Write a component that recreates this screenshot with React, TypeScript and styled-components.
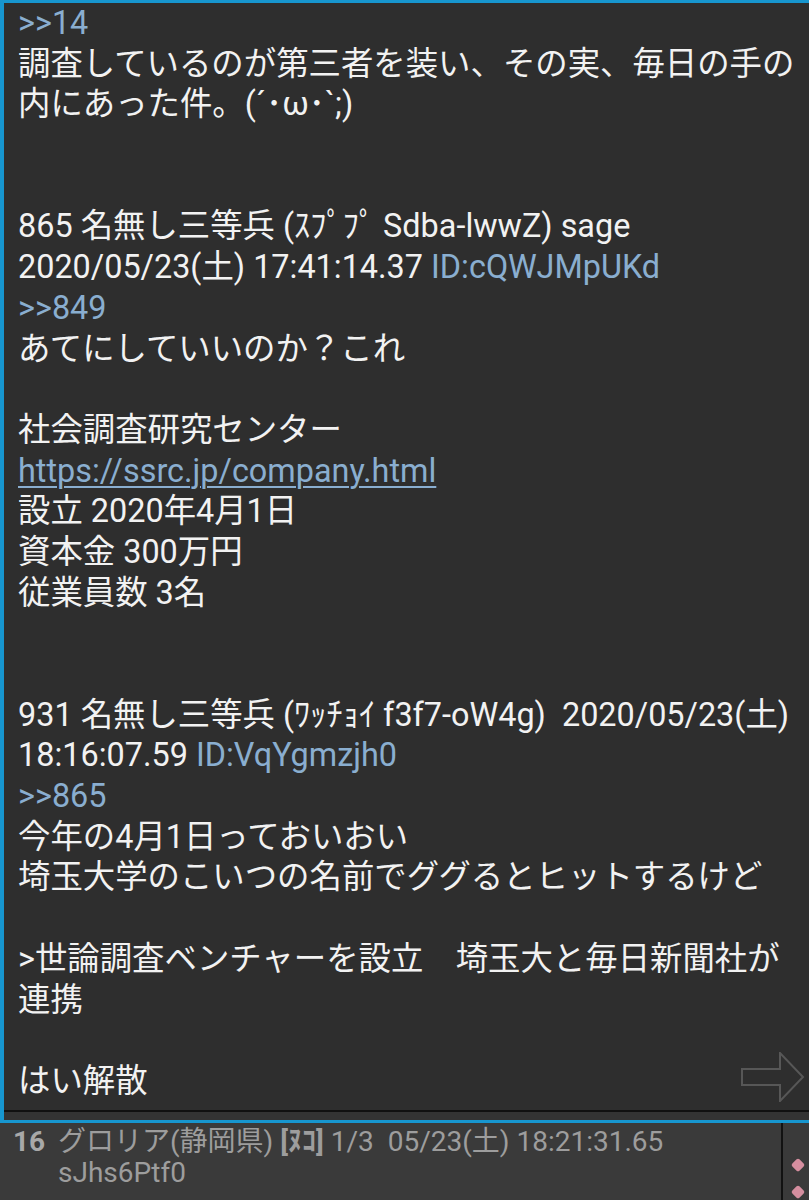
import styled, { createGlobalStyle } from "styled-components";

const GlobalStyle = createGlobalStyle`
  html, body {
    margin: 0;
    padding: 0;
    background: #3a3a3a;
  }
  body {
    font-family: Roboto, "Noto Sans CJK JP", sans-serif;
  }
`;

const Screen = styled.div`
  width: 809px;
  height: 1200px;
  overflow: hidden;
  display: flex;
  flex-direction: column;
`;

const Viewer = styled.div`
  position: relative;
  border-top: 3px solid #1796cf;
  border-left: 4px solid #1796cf;
  border-bottom: 3px solid #1796cf;
  background: #2e2e2e;
`;

const Body = styled.div`
  height: 1107px;
  overflow: hidden;
  padding-left: 14px;
  color: #f2f2f2;
  font-size: 32.4px;
`;

const Line = styled.div`
  height: 40.7px;
  line-height: 40.7px;
  white-space: pre;
`;

const Anchor = styled.span`
  color: #8aaed0;
`;

const Link = styled.span`
  color: #8aaed0;
  text-decoration: underline;
  text-decoration-thickness: 2px;
  text-underline-offset: 4px;
`;

const Rule = styled.div`
  height: 2px;
  background: #101010;
`;

const Strip = styled.div`
  height: 8px;
  background: #333333;
`;

const NextButton = styled.svg`
  position: absolute;
  right: 4px;
  bottom: 18px;
`;

const Footer = styled.div`
  flex: 1;
  display: flex;
`;

const FooterMain = styled.div`
  width: 783px;
  display: flex;
  padding-top: 3px;
  border-right: 2px solid #121212;
  box-sizing: border-box;
  font-size: 28px;
  line-height: 31px;
  color: #9d9d9d;
`;

const ResNum = styled.div`
  width: 46px;
  padding-left: 13px;
  box-sizing: border-box;
  font-weight: 700;
  color: #a8a8a8;
  margin-right: 12px;
`;

const ResHead = styled.div`
  white-space: pre;
`;

const Bold = styled.b`
  font-weight: 700;
`;

const Side = styled.div`
  flex: 1;
  display: flex;
  flex-direction: column;
  align-items: center;
  padding-top: 37px;
  padding-left: 3px;
  gap: 17px;
`;

const Diamond = styled.div`
  width: 10px;
  height: 10px;
  background: #d58e9f;
  transform: rotate(45deg);
  border-radius: 2px;
`;

export default function App() {
  return (
    <Screen>
      <GlobalStyle />
      <Viewer>
        <Body>
          <Line><Anchor>&gt;&gt;14</Anchor></Line>
          <Line>調査しているのが第三者を装い、その実、毎日の手の</Line>
          <Line>内にあった件。(´･ω･`;)</Line>
          <Line />
          <Line />
          <Line>865 名無し三等兵 (ｽﾌﾟﾌﾟ Sdba-lwwZ) sage</Line>
          <Line>2020/05/23(土) 17:41:14.37 <Anchor>ID:cQWJMpUKd</Anchor></Line>
          <Line><Anchor>&gt;&gt;849</Anchor></Line>
          <Line>あてにしていいのか？これ</Line>
          <Line />
          <Line>社会調査研究センター</Line>
          <Line><Link>https://ssrc.jp/company.html</Link></Line>
          <Line>設立 2020年4月1日</Line>
          <Line>資本金 300万円</Line>
          <Line>従業員数 3名</Line>
          <Line />
          <Line />
          <Line>931 名無し三等兵 (ﾜｯﾁｮｲ f3f7-oW4g)  2020/05/23(土)</Line>
          <Line>18:16:07.59 <Anchor>ID:VqYgmzjh0</Anchor></Line>
          <Line><Anchor>&gt;&gt;865</Anchor></Line>
          <Line>今年の4月1日っておいおい</Line>
          <Line>埼玉大学のこいつの名前でググるとヒットするけど</Line>
          <Line />
          <Line>&gt;世論調査ベンチャーを設立　埼玉大と毎日新聞社が</Line>
          <Line>連携</Line>
          <Line />
          <Line>はい解散</Line>
        </Body>
        <NextButton width="64" height="50" viewBox="0 0 64 50">
          <path
            d="M1 17 H39 V1 L62 25 L39 49 V33 H1 Z"
            fill="none"
            stroke="#575757"
            strokeWidth="2"
            strokeLinejoin="miter"
          />
        </NextButton>
        <Rule />
        <Strip />
      </Viewer>
      <Footer>
        <FooterMain>
          <ResNum>16</ResNum>
          <div>
            <ResHead>
              グロリア(静岡県) <Bold>[ﾇｺ]</Bold> 1/3  05/23(土) 18:21:31.65
            </ResHead>
            <ResHead>sJhs6Ptf0</ResHead>
          </div>
        </FooterMain>
        <Side>
          <Diamond />
          <Diamond />
        </Side>
      </Footer>
    </Screen>
  );
}
